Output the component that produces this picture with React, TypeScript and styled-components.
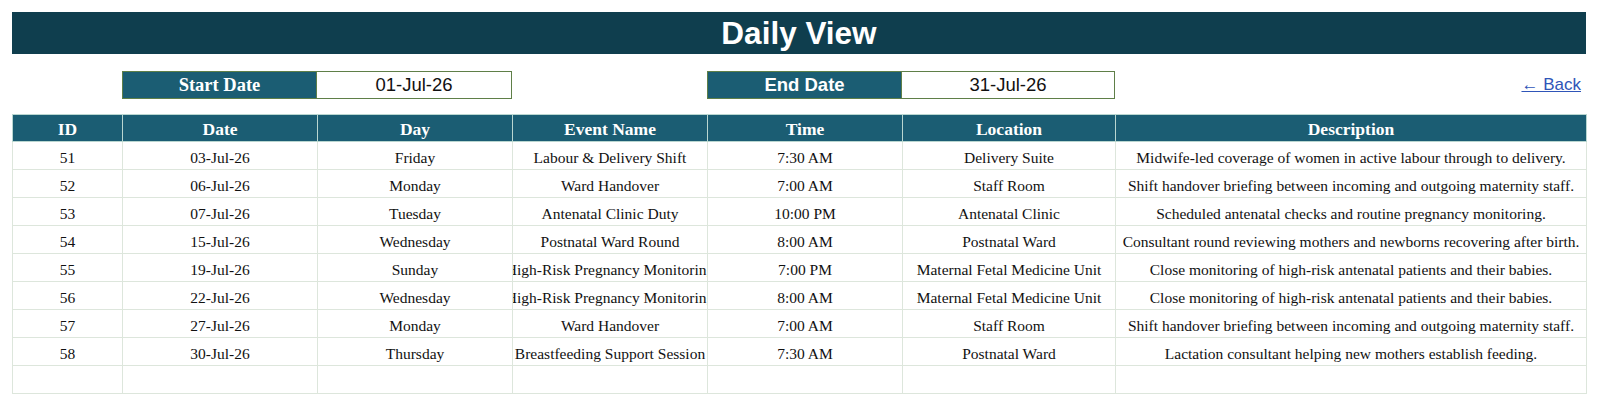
import React from "react";
import styled, { createGlobalStyle } from "styled-components";

const GlobalStyle = createGlobalStyle`
  html, body { margin: 0; padding: 0; background: #ffffff; }
  body { font-family: "Liberation Serif", "Times New Roman", serif; color: #111; }
`;

const COL_WIDTHS = [110, 195, 195, 195, 195, 213, 471];
const COLS = COL_WIDTHS.map((w) => `${w}px`).join(" ");

const Page = styled.div`
  width: 1574px;
  padding: 12px 14px 0 12px;
`;

const TitleBar = styled.header`
  height: 42px;
  background: #0f3e4e;
  display: flex;
  align-items: center;
  justify-content: center;
  color: #ffffff;
  font-family: "Liberation Sans", Arial, sans-serif;
  font-weight: 700;
  font-size: 31.5px;
`;

const Controls = styled.div`
  display: grid;
  grid-template-columns: ${COLS};
  height: 28px;
  margin-top: 17px;
  margin-bottom: 15px;
`;

const DateBox = styled.div<{ $col: string; $split: string }>`
  grid-column: ${(p) => p.$col};
  display: grid;
  grid-template-columns: ${(p) => p.$split};
  border: 1.5px solid #5f7f48;
  box-sizing: border-box;
`;

const DateLabel = styled.div<{ $serif?: boolean }>`
  background: #1b5d73;
  color: #ffffff;
  display: flex;
  align-items: center;
  justify-content: center;
  font-weight: 700;
  font-size: 18.5px;
  font-family: ${(p) =>
    p.$serif
      ? `"Liberation Serif", "Times New Roman", serif`
      : `"Liberation Sans", Arial, sans-serif`};
  border-right: 1.5px solid #5f7f48;
`;

const DateValue = styled.div`
  background: #ffffff;
  color: #111;
  display: flex;
  align-items: center;
  justify-content: center;
  font-family: "Liberation Sans", Arial, sans-serif;
  font-size: 18.5px;
`;

const BackCell = styled.div`
  grid-column: 7;
  display: flex;
  align-items: center;
  justify-content: flex-end;
  padding-right: 5px;
`;

const BackLink = styled.a`
  color: #2f55b8;
  text-decoration: underline;
  font-family: "Liberation Sans", Arial, sans-serif;
  font-size: 17px;
  cursor: pointer;
`;

const Table = styled.table`
  border-collapse: collapse;
  table-layout: fixed;
  width: 1574px;
  border: 1px solid #dde6dc;
`;

const HeadRow = styled.tr`
  height: 27px;
`;

const HeadCell = styled.th`
  background: #1b5d73;
  color: #ffffff;
  font-family: "Liberation Serif", "Times New Roman", serif;
  font-weight: 700;
  font-size: 17.5px;
  text-align: center;
  padding: 2px 0 0;
  border: 1px solid #b9d6d0;
`;

const Row = styled.tr`
  height: 28px;
`;

const Cell = styled.td`
  padding: 0;
  border: 1px solid #dde6dc;
  font-size: 15.5px;
  color: #111;
  vertical-align: middle;
`;

const CellInner = styled.div`
  display: flex;
  justify-content: center;
  align-items: center;
  overflow: hidden;
  white-space: nowrap;
  padding-top: 4px;
`;

const CellText = styled.span`
  flex-shrink: 0;
`;

type Ev = {
  id: number;
  date: string;
  day: string;
  name: string;
  time: string;
  location: string;
  desc: string;
};

const events: Ev[] = [
  { id: 51, date: "03-Jul-26", day: "Friday", name: "Labour & Delivery Shift", time: "7:30 AM", location: "Delivery Suite", desc: "Midwife-led coverage of women in active labour through to delivery." },
  { id: 52, date: "06-Jul-26", day: "Monday", name: "Ward Handover", time: "7:00 AM", location: "Staff Room", desc: "Shift handover briefing between incoming and outgoing maternity staff." },
  { id: 53, date: "07-Jul-26", day: "Tuesday", name: "Antenatal Clinic Duty", time: "10:00 PM", location: "Antenatal Clinic", desc: "Scheduled antenatal checks and routine pregnancy monitoring." },
  { id: 54, date: "15-Jul-26", day: "Wednesday", name: "Postnatal Ward Round", time: "8:00 AM", location: "Postnatal Ward", desc: "Consultant round reviewing mothers and newborns recovering after birth." },
  { id: 55, date: "19-Jul-26", day: "Sunday", name: "High-Risk Pregnancy Monitoring", time: "7:00 PM", location: "Maternal Fetal Medicine Unit", desc: "Close monitoring of high-risk antenatal patients and their babies." },
  { id: 56, date: "22-Jul-26", day: "Wednesday", name: "High-Risk Pregnancy Monitoring", time: "8:00 AM", location: "Maternal Fetal Medicine Unit", desc: "Close monitoring of high-risk antenatal patients and their babies." },
  { id: 57, date: "27-Jul-26", day: "Monday", name: "Ward Handover", time: "7:00 AM", location: "Staff Room", desc: "Shift handover briefing between incoming and outgoing maternity staff." },
  { id: 58, date: "30-Jul-26", day: "Thursday", name: "Breastfeeding Support Session", time: "7:30 AM", location: "Postnatal Ward", desc: "Lactation consultant helping new mothers establish feeding." },
];

const headers = ["ID", "Date", "Day", "Event Name", "Time", "Location", "Description"];

const TextCell = ({ children }: { children?: React.ReactNode }) => (
  <Cell>
    <CellInner>
      <CellText>{children}</CellText>
    </CellInner>
  </Cell>
);

export default function App() {
  return (
    <>
      <GlobalStyle />
      <Page>
        <TitleBar>Daily View</TitleBar>
        <Controls>
          <DateBox $col="2 / 4" $split="195fr 195fr">
            <DateLabel $serif>Start Date</DateLabel>
            <DateValue>01-Jul-26</DateValue>
          </DateBox>
          <DateBox $col="5 / 7" $split="195fr 213fr">
            <DateLabel>End Date</DateLabel>
            <DateValue>31-Jul-26</DateValue>
          </DateBox>
          <BackCell>
            <BackLink>← Back</BackLink>
          </BackCell>
        </Controls>
        <Table>
          <colgroup>
            {COL_WIDTHS.map((w, i) => (
              <col key={i} style={{ width: w }} />
            ))}
          </colgroup>
          <thead>
            <HeadRow>
              {headers.map((h) => (
                <HeadCell key={h}>{h}</HeadCell>
              ))}
            </HeadRow>
          </thead>
          <tbody>
            {events.map((e) => (
              <Row key={e.id}>
                <TextCell>{e.id}</TextCell>
                <TextCell>{e.date}</TextCell>
                <TextCell>{e.day}</TextCell>
                <TextCell>{e.name}</TextCell>
                <TextCell>{e.time}</TextCell>
                <TextCell>{e.location}</TextCell>
                <TextCell>{e.desc}</TextCell>
              </Row>
            ))}
            <Row>
              {headers.map((h) => (
                <TextCell key={h} />
              ))}
            </Row>
          </tbody>
        </Table>
      </Page>
    </>
  );
}
